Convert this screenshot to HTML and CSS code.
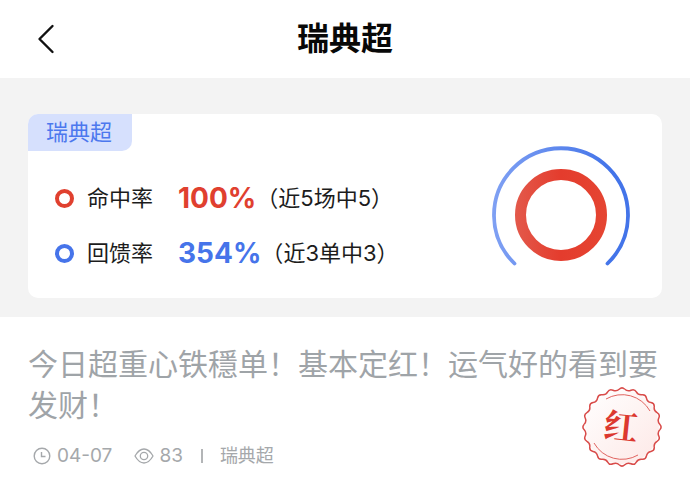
FILE: index.html
```html
<!DOCTYPE html>
<html lang="zh-CN">
<head>
<meta charset="utf-8">
<meta name="viewport" content="width=device-width, initial-scale=1">
<title>瑞典超</title>
<link rel="stylesheet" href="styles.css">
</head>
<body>
<header class="topbar">
  <button class="back" type="button" aria-label="返回">
    <svg width="18" height="30" viewBox="0 0 18 30" fill="none" stroke="#111" stroke-width="2.4" stroke-linecap="round" stroke-linejoin="round"><path d="M15.500 2 2.500 15l13 13"/></svg>
  </button>
  <h1>瑞典超</h1>
</header>
<section class="summary">
  <div class="card">
    <div class="details">
      <span class="tag">瑞典超</span>
      <ul class="rates">
        <li class="hit"><i class="dot"></i><span class="label">命中率</span><strong>100%</strong><span class="note"><span class="paren">（</span>近5场中5<span class="paren">）</span></span></li>
        <li class="payback"><i class="dot"></i><span class="label">回馈率</span><strong>354%</strong><span class="note"><span class="paren">（</span>近3单中3<span class="paren">）</span></span></li>
      </ul>
    </div>
    <svg class="gauge" width="140" height="140" viewBox="-70 -70 140 140" fill="none">
      <defs>
        <linearGradient id="blue" gradientUnits="userSpaceOnUse" x1="-68" y1="0" x2="50" y2="0"><stop stop-color="#7fa0f3"/><stop offset="1" stop-color="#4374e9"/></linearGradient>
        <linearGradient id="red" gradientUnits="userSpaceOnUse" x1="-46" y1="0" x2="46" y2="0"><stop stop-color="#e3594b"/><stop offset=".5" stop-color="#e43c2d"/><stop offset="1" stop-color="#e54532"/></linearGradient>
      </defs>
      <path d="M-46.500 48.500A67 67 0 1 1 46.500 48.500" stroke="url(#blue)" stroke-width="3.800" stroke-linecap="round"/>
      <circle r="40.500" stroke="url(#red)" stroke-width="11"/>
    </svg>
  </div>
</section>
<main class="post">
  <h2>今日超重心铁穩单！基本定红！运气好的看到要发财！</h2>
  <div class="meta">
    <svg class="clock" width="18" height="18" viewBox="0 0 18 18" fill="none" stroke="currentColor" stroke-width="1.400"><circle cx="9" cy="9" r="7.800"/><path d="M8.500 5v4.500h4"/></svg>
    <time datetime="04-07">04-07</time>
    <svg class="eye" width="20" height="18" viewBox="0 0 20 18" fill="none" stroke="currentColor" stroke-width="1.300" stroke-linejoin="round"><path d="M1 9Q5 2 10 2t9 7q-4 7-9 7T1 9Z"/><circle cx="10" cy="9" r="3.700"/></svg>
    <span>83</span>
    <i class="divider"></i>
    <span class="league">瑞典超</span>
  </div>
  <svg class="seal" width="80" height="80" viewBox="-40 -40 80 80" fill="none">
    <defs>
      <linearGradient id="paper" x1="0" y1="0" x2="1" y2="1"><stop stop-color="#fff"/><stop offset="1" stop-color="#fde8e6"/></linearGradient>
      <path id="edge" d="M2.790-37.780Q5.570-35.160 9.030-36.790Q12.480-38.420 14.320-35.070Q16.160-31.720 19.960-32.200Q23.750-32.680 24.460-28.930Q25.170-25.170 28.930-24.460Q32.680-23.750 32.200-19.960Q31.720-16.160 35.070-14.320Q38.420-12.480 36.790-9.030Q35.160-5.570 37.780-2.790Q40.400 0 37.780 2.790"/>
    </defs>
    <circle r="37" fill="url(#paper)"/>
    <g stroke="#d94c4a" stroke-width="1.500">
      <use href="#edge"/><use href="#edge" transform="rotate(90)"/><use href="#edge" transform="rotate(180)"/><use href="#edge" transform="rotate(270)"/>
    </g>
    <path d="M-16-28A32 32 0 0 1 28-16M-28 16A32 32 0 0 0 16 28" stroke="#e06460"/>
    <text class="seal-text" x="-1" y="12" text-anchor="middle" transform="rotate(6)">红</text>
  </svg>
</main>
</body>
</html>
```
FILE: styles.css
```css
* { box-sizing: border-box; }

body {
  margin: 0;
  background: #fff;
  color: #1c1c1c;
  font-family: Inter, "Noto Sans CJK SC", sans-serif;
}

h1, h2, ul { margin: 0; padding: 0; }
svg { display: block; flex: none; }

.topbar {
  display: grid;
  grid-template-columns: 64px 1fr 64px;
  align-items: center;
  height: 78px;
}

.back {
  justify-self: end;
  padding: 0;
  margin-right: 9px;
  border: 0;
  background: none;
}

h1 {
  color: #080808;
  font-size: 32px;
  font-weight: 700;
  line-height: 40px;
  text-align: center;
}

.summary {
  padding: 36px 28px 19px;
  background: #f3f3f3;
}

.card {
  display: flex;
  justify-content: space-between;
  min-height: 184px;
  padding-right: 31px;
  border-radius: 10px;
  background: #fff;
}

.gauge { margin-top: 31px; }

.tag {
  display: inline-block;
  padding: 0 20px 0 18px;
  border-radius: 10px 0;
  background: #d6e0fd;
  color: #4c78ee;
  font-size: 22px;
  line-height: 37px;
}

.rates {
  display: grid;
  gap: 15px;
  padding: 27px 0 0 27px;
  list-style: none;
}

.rates li {
  display: flex;
  align-items: center;
  font-size: 22px;
  line-height: 40px;
  white-space: nowrap;
}

.dot {
  width: 19px;
  height: 19px;
  margin-right: 13px;
  border: 4px solid;
  border-radius: 50%;
}

.label { margin-right: 25px; }
.rates strong { font-size: 28px; font-weight: 700; }
.paren { font-family: "Noto Sans CJK SC", sans-serif; line-height: 1; }
.hit .dot, .hit strong { color: #e0402f; }
.payback .dot, .payback strong { color: #4674ea; }

.post {
  position: relative;
  padding: 27px 28px;
}

h2 {
  color: #9fa4a8;
  font-size: 30px;
  font-weight: 400;
  line-height: 41px;
}

.meta {
  display: flex;
  align-items: center;
  margin: 16px 0 0 5px;
  color: #a5a8ab;
  font-size: 19px;
  line-height: 28px;
}

.clock { margin-right: 6px; }
.eye { margin: 0 5px 0 22px; }
.league { font-size: 18px; }

.divider {
  width: 2px;
  height: 14px;
  margin: 0 17px 0 18px;
  background: #b3b5b7;
}

.seal {
  position: absolute;
  right: 28px;
  top: 70px;
}

.seal-text {
  fill: #dc382f;
  font-family: "Noto Serif CJK SC", "Noto Sans CJK SC", serif;
  font-size: 34px;
  font-weight: 700;
}
```
